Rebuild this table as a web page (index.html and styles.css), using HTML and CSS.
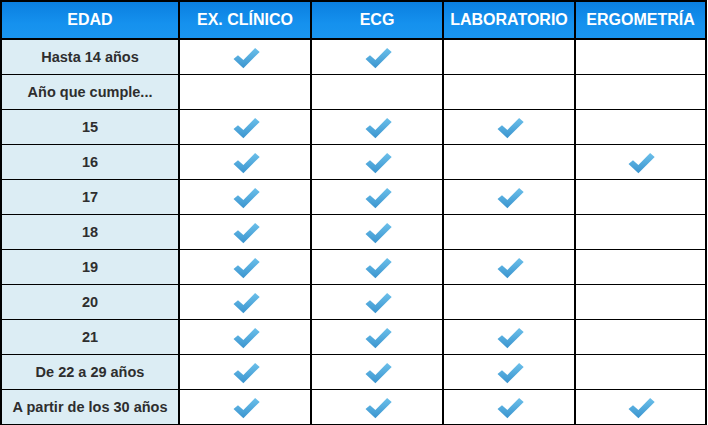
FILE: index.html
```html
<!DOCTYPE html>
<html lang="es">
<head>
<meta charset="utf-8">
<title>Exámenes por edad</title>
<link rel="stylesheet" href="styles.css">
</head>
<body>
<svg width="0" height="0" class="defs">
  <defs>
    <linearGradient id="ck" x1="0" y1="0" x2="0" y2="1">
      <stop offset="0" stop-color="#6cc0ea"/>
      <stop offset="1" stop-color="#3a94cf"/>
    </linearGradient>
    <symbol id="check" viewBox="0 0 26 22">
      <path d="M0.5 12.5 L4.8 8.8 L10 13.3 L21.3 1.8 L25.7 5.6 L10 21.3 Z" fill="url(#ck)"/>
    </symbol>
  </defs>
</svg>
<table class="grid">
  <colgroup>
    <col class="c-age"><col class="c-x"><col class="c-x"><col class="c-x"><col class="c-last">
  </colgroup>
  <thead>
    <tr><th>EDAD</th><th>EX. CLÍNICO</th><th>ECG</th><th>LABORATORIO</th><th>ERGOMETRÍA</th></tr>
  </thead>
  <tbody>
    <tr><td class="age">Hasta 14 años</td><td><svg class="ok"><use href="#check"/></svg></td><td><svg class="ok"><use href="#check"/></svg></td><td></td><td></td></tr>
    <tr><td class="age">Año que cumple...</td><td></td><td></td><td></td><td></td></tr>
    <tr><td class="age">15</td><td><svg class="ok"><use href="#check"/></svg></td><td><svg class="ok"><use href="#check"/></svg></td><td><svg class="ok"><use href="#check"/></svg></td><td></td></tr>
    <tr><td class="age">16</td><td><svg class="ok"><use href="#check"/></svg></td><td><svg class="ok"><use href="#check"/></svg></td><td></td><td><svg class="ok"><use href="#check"/></svg></td></tr>
    <tr><td class="age">17</td><td><svg class="ok"><use href="#check"/></svg></td><td><svg class="ok"><use href="#check"/></svg></td><td><svg class="ok"><use href="#check"/></svg></td><td></td></tr>
    <tr><td class="age">18</td><td><svg class="ok"><use href="#check"/></svg></td><td><svg class="ok"><use href="#check"/></svg></td><td></td><td></td></tr>
    <tr><td class="age">19</td><td><svg class="ok"><use href="#check"/></svg></td><td><svg class="ok"><use href="#check"/></svg></td><td><svg class="ok"><use href="#check"/></svg></td><td></td></tr>
    <tr><td class="age">20</td><td><svg class="ok"><use href="#check"/></svg></td><td><svg class="ok"><use href="#check"/></svg></td><td></td><td></td></tr>
    <tr><td class="age">21</td><td><svg class="ok"><use href="#check"/></svg></td><td><svg class="ok"><use href="#check"/></svg></td><td><svg class="ok"><use href="#check"/></svg></td><td></td></tr>
    <tr><td class="age">De 22 a 29 años</td><td><svg class="ok"><use href="#check"/></svg></td><td><svg class="ok"><use href="#check"/></svg></td><td><svg class="ok"><use href="#check"/></svg></td><td></td></tr>
    <tr><td class="age">A partir de los 30 años</td><td><svg class="ok"><use href="#check"/></svg></td><td><svg class="ok"><use href="#check"/></svg></td><td><svg class="ok"><use href="#check"/></svg></td><td><svg class="ok"><use href="#check"/></svg></td></tr>
  </tbody>
</table>
</body>
</html>
```

FILE: styles.css
```css
html, body {
  margin: 0;
  padding: 0;
  background: #ffffff;
}
.defs {
  position: absolute;
  width: 0;
  height: 0;
}
.grid {
  border-collapse: collapse;
  width: 707px;
  table-layout: fixed;
  font-family: "Liberation Sans", Arial, sans-serif;
  border: 2px solid #000;
}
.c-age { width: 178px; }
.c-x { width: 132px; }
.c-last { width: 131px; }
.grid th {
  height: 36px;
  padding: 0;
  background: linear-gradient(#0a7fe0, #1591ee 60%, #1a95ef);
  color: #ffffff;
  font-size: 16px;
  font-weight: bold;
  text-align: center;
  border: 2px solid #000;
  white-space: nowrap;
}
.grid td {
  height: 34px;
  padding: 0;
  border: 1px solid #000;
  border-left-width: 2px;
  text-align: center;
  vertical-align: middle;
  background: #ffffff;
}
.grid td.age {
  background: #dcedf4;
  color: #2e2e2e;
  font-size: 14.5px;
  font-weight: bold;
  white-space: nowrap;
}
.ok {
  width: 27px;
  height: 23px;
  display: block;
  margin: 0 auto;
  position: relative;
  left: 1px;
}
```
